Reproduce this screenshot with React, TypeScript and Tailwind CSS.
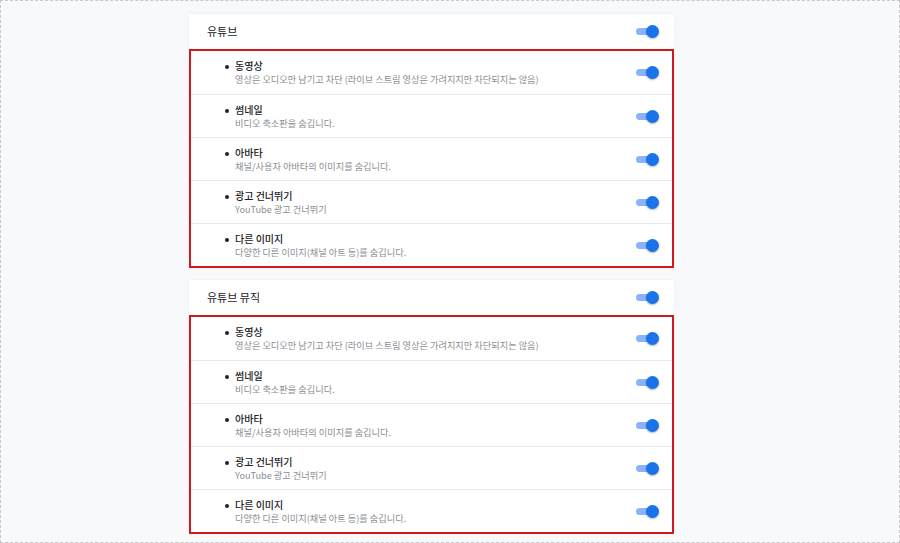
import React from 'react';

interface Option {
  title: string;
  desc: string;
}

const options: Option[] = [
  { title: '동영상', desc: '영상은 오디오만 남기고 차단 (라이브 스트림 영상은 가려지지만 차단되지는 않음)' },
  { title: '썸네일', desc: '비디오 축소판을 숨깁니다.' },
  { title: '아바타', desc: '채널/사용자 아바타의 이미지를 숨깁니다.' },
  { title: '광고 건너뛰기', desc: 'YouTube 광고 건너뛰기' },
  { title: '다른 이미지', desc: '다양한 다른 이미지(채널 아트 등)를 숨깁니다.' },
];

const Toggle = () => (
  <div className="relative h-[13px] w-[23px] shrink-0">
    <div className="absolute left-0 top-[3px] h-[7px] w-[20px] rounded-full bg-[#8ab4f8]" />
    <div className="absolute right-0 top-0 h-[13px] w-[13px] rounded-full bg-[#1a73e8] shadow-[0_1px_2px_rgba(0,0,0,0.3)]" />
  </div>
);

const Section = ({ name }: { name: string }) => (
  <div className="bg-white shadow-[0_0_3px_rgba(0,0,0,0.06)]">
    <div className="flex h-[35px] items-center justify-between pl-[18px] pr-[15px]">
      <span className="text-[11px] text-[#202124]">{name}</span>
      <Toggle />
    </div>
    <div className="border-2 border-[#d0191f]">
      {options.map((o, i) => (
        <div
          key={o.title}
          className={`flex h-[43px] items-center justify-between pl-[34px] pr-[13px] ${i > 0 ? 'border-t border-[#e8eaed]' : ''}`}
        >
          <div className="flex">
            <span className="mr-[6px] mt-[6px] h-[4px] w-[4px] rounded-full bg-[#202124]" />
            <div className="flex flex-col">
              <span className="text-[10px] leading-[14px] font-medium text-[#202124]">{o.title}</span>
              <span className="text-[9.2px] leading-[13px] text-[#8a8e93]">{o.desc}</span>
            </div>
          </div>
          <Toggle />
        </div>
      ))}
    </div>
  </div>
);

export default function App() {
  return (
    <div
      className="h-[543px] w-[900px] overflow-hidden border border-dashed border-[#c8c8c8] bg-[#f8f9fb]"
      style={{ fontFamily: '"Noto Sans CJK KR", "Noto Sans", sans-serif' }}
    >
      <div className="ml-[188px] mt-[13px] flex w-[485px] flex-col gap-[12px]">
        <Section name="유튜브" />
        <Section name="유튜브 뮤직" />
      </div>
    </div>
  );
}
